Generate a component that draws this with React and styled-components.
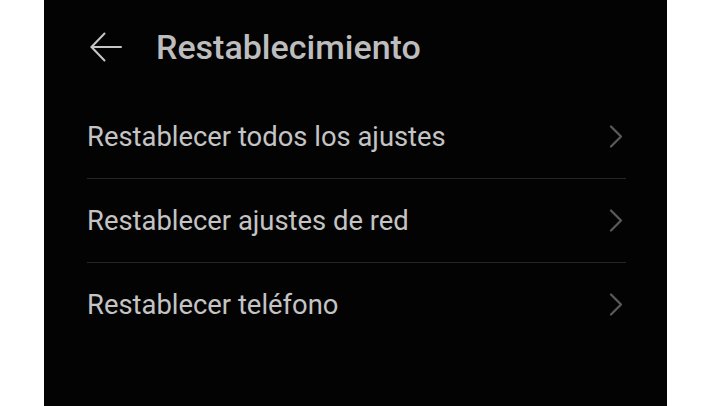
import React from 'react'
import styled, { createGlobalStyle } from 'styled-components'

const GlobalStyle = createGlobalStyle`
  html, body {
    margin: 0;
    padding: 0;
    background: #ffffff;
  }
  body {
    font-family: Roboto, "Noto Sans", "Liberation Sans", sans-serif;
  }
`

const Page = styled.div`
  display: flex;
  justify-content: flex-start;
  width: 728px;
  height: 406px;
  overflow: hidden;
  background: #ffffff;
`

const Screen = styled.div`
  margin-left: 44px;
  width: 623px;
  height: 406px;
  background: #030303;
  display: flex;
  flex-direction: column;
  padding: 0 41px 0 43px;
  box-sizing: border-box;
`

const Header = styled.div`
  display: flex;
  align-items: center;
  height: 95px;
  box-sizing: border-box;
`

const BackButton = styled.button`
  background: none;
  border: none;
  padding: 0;
  margin: -2px 34px 0 3px;
  width: 32px;
  height: 30px;
  display: flex;
  align-items: center;
  justify-content: center;
  color: #c6c6c6;
  cursor: pointer;
`

const Title = styled.h1`
  margin: -1px 0 0 0;
  font-size: 34px;
  font-weight: 500;
  color: #bdbdbd;
`

const List = styled.div`
  display: flex;
  flex-direction: column;
`

const Row = styled.div`
  display: flex;
  align-items: center;
  justify-content: space-between;
  height: 83px;
  border-bottom: ${p => (p.$last ? 'none' : '1px solid #262626')};
  cursor: pointer;
`

const Label = styled.span`
  font-size: 27.4px;
  color: #c4c4c4;
  font-weight: 400;
`

const Chevron = styled.span`
  display: flex;
  color: #5a5a5a;
  margin-right: 3px;
`

const items = [
  'Restablecer todos los ajustes',
  'Restablecer ajustes de red',
  'Restablecer teléfono',
]

export default function App() {
  return (
    <>
      <GlobalStyle />
      <Page>
        <Screen>
          <Header>
            <BackButton aria-label="Atrás">
              <svg width="32" height="30" viewBox="0 0 32 30" fill="none" stroke="currentColor" strokeWidth="2" strokeLinecap="round" strokeLinejoin="round">
                <path d="M1.5 15 H31" />
                <path d="M14.5 1.5 L1.5 15 L14.5 28.5" />
              </svg>
            </BackButton>
            <Title>Restablecimiento</Title>
          </Header>
          <List>
            {items.map((label, i) => (
              <Row key={label} $last={i === items.length - 1}>
                <Label>{label}</Label>
                <Chevron>
                  <svg width="14" height="23" viewBox="0 0 14 23" fill="none" stroke="currentColor" strokeWidth="2.2" strokeLinecap="round" strokeLinejoin="round">
                    <path d="M2 1.5 L12 11.5 L2 21.5" />
                  </svg>
                </Chevron>
              </Row>
            ))}
          </List>
        </Screen>
      </Page>
    </>
  )
}
